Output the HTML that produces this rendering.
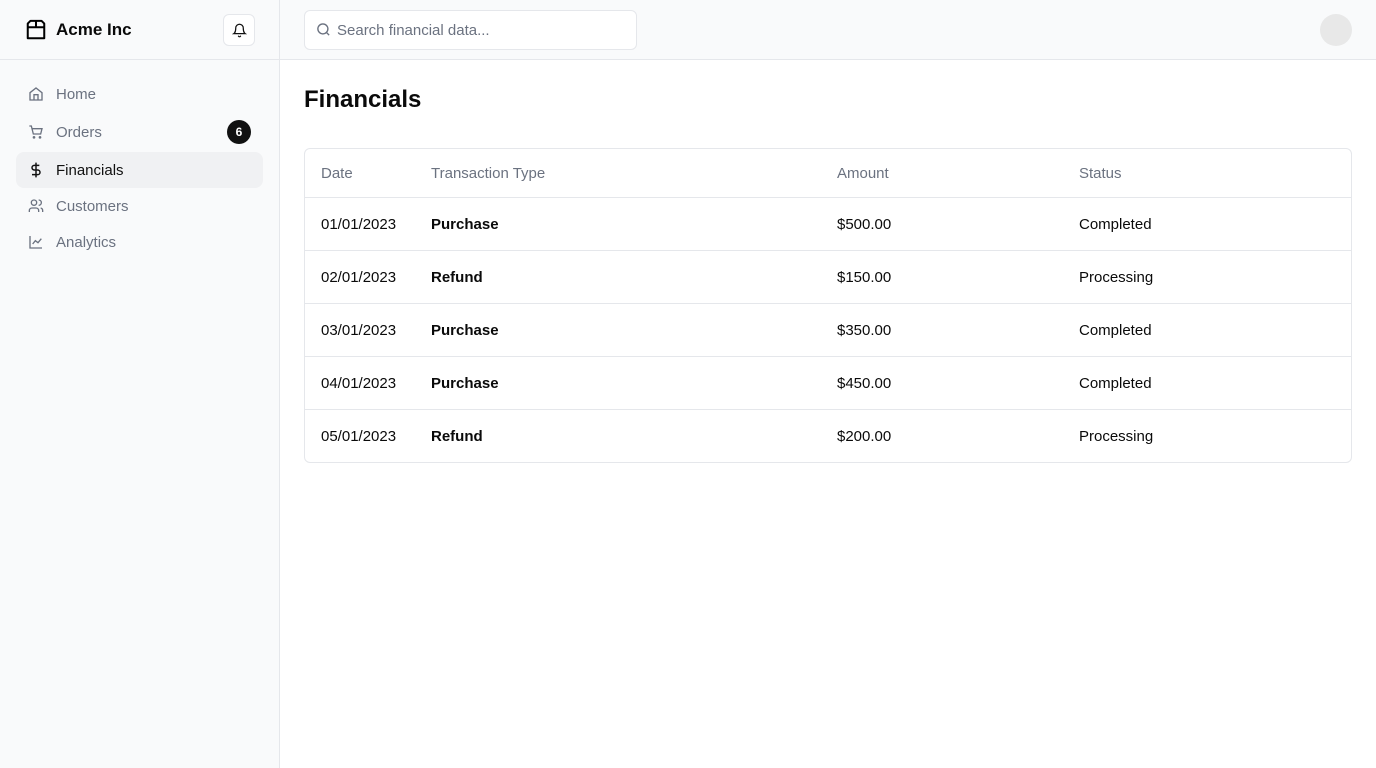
<!DOCTYPE html>
<html><head><style>
*{box-sizing:border-box;margin:0;padding:0}
body{width:1376px;height:768px;font-family:"Liberation Sans",sans-serif;background:#fff;position:relative;overflow:hidden;color:#0a0a0a}
.side{position:absolute;left:0;top:0;width:280px;height:768px;background:#f9fafb;border-right:1px solid #e5e7eb}
.sh{height:60px;border-bottom:1px solid #e5e7eb;position:relative}
.logo{position:absolute;left:25px;top:19px;display:flex;align-items:center;gap:9px;font-weight:bold;font-size:17px}
.bell{position:absolute;left:223px;top:14px;width:32px;height:32px;border:1px solid #e5e7eb;border-radius:6px;background:#fff;display:flex;align-items:center;justify-content:center}
.nav{position:absolute;left:16px;width:247px;height:36px;display:flex;align-items:center;padding-left:12px;gap:12px;font-size:15px;color:#6b7280;border-radius:8px}
.nav.act{background:#f0f1f3;color:#111}
.badge{position:absolute;right:12px;top:6px;width:24px;height:24px;border-radius:50%;background:#111;color:#fff;font-size:12px;font-weight:bold;display:flex;align-items:center;justify-content:center}
.top{position:absolute;left:280px;top:0;right:0;height:60px;background:#f9fafb;border-bottom:1px solid #e5e7eb}
.search{position:absolute;left:24px;top:10px;width:333px;height:40px;background:#fff;border:1px solid #e5e7eb;border-radius:6px;font-size:15px;color:#6b7280;display:flex;align-items:center;padding-left:32px}
.av{position:absolute;right:24px;top:14px;width:32px;height:32px;border-radius:50%;background:#e8e8e8}
h1{position:absolute;left:304px;top:86px;font-size:24px;font-weight:bold}
table{position:absolute;left:304px;top:148px;width:1048px;border:1px solid #e5e7eb;border-radius:6px;border-collapse:separate;border-spacing:0;font-size:15px}
th{height:48px;text-align:left;font-weight:normal;color:#6b7280;padding-left:16px}
td{height:53px;padding-left:16px;border-top:1px solid #e5e7eb}
td.b{font-weight:bold}
</style></head><body>
<div class="side">
 <div class="sh">
  <div class="logo"><svg width="22" height="22" viewBox="0 0 24 24" fill="none" stroke="#000" stroke-width="2.2" stroke-linejoin="round"><path d="M3 5l3-3h12l3 3v16H3z"/><path d="M3 9h18M12 2v7"/></svg>Acme Inc</div>
  <div class="bell"><svg width="15" height="15" viewBox="0 0 24 24" fill="none" stroke="#111" stroke-width="2" stroke-linecap="round"><path d="M6 8a6 6 0 0 1 12 0c0 7 3 9 3 9H3s3-2 3-9"/><path d="M10.3 21a1.9 1.9 0 0 0 3.4 0"/></svg></div>
 </div>
 <div class="nav" style="top:76px"><svg width="16" height="16" viewBox="0 0 24 24" fill="none" stroke="#6b7280" stroke-width="2"><path d="M3 10l9-7 9 7v11H3z"/><path d="M9 21v-8h6v8"/></svg>Home</div>
 <div class="nav" style="top:114px"><svg width="16" height="16" viewBox="0 0 24 24" fill="none" stroke="#6b7280" stroke-width="2"><path d="M2 3h3l3 12h11l2-8H6"/><circle cx="9" cy="20" r="1"/><circle cx="18" cy="20" r="1"/></svg>Orders<span class="badge">6</span></div>
 <div class="nav act" style="top:152px"><svg width="16" height="16" viewBox="0 0 24 24" fill="none" stroke="#111" stroke-width="2.2"><path d="M12 1v22M17 5H9.5a3.5 3.5 0 0 0 0 7h5a3.5 3.5 0 0 1 0 7H6"/></svg>Financials</div>
 <div class="nav" style="top:188px"><svg width="16" height="16" viewBox="0 0 24 24" fill="none" stroke="#6b7280" stroke-width="2"><circle cx="9" cy="7" r="4"/><path d="M2 21v-2a4 4 0 0 1 4-4h6a4 4 0 0 1 4 4v2M16 3a4 4 0 0 1 0 8M22 21v-2a4 4 0 0 0-3-4"/></svg>Customers</div>
 <div class="nav" style="top:224px"><svg width="16" height="16" viewBox="0 0 24 24" fill="none" stroke="#6b7280" stroke-width="2"><path d="M3 3v18h18"/><path d="M7 15l4-5 4 3 5-6"/></svg>Analytics</div>
</div>
<div class="top">
 <div class="search"><svg style="position:absolute;left:11px;top:11px" width="15" height="15" viewBox="0 0 24 24" fill="none" stroke="#6b7280" stroke-width="2.2"><circle cx="11" cy="11" r="8"/><path d="M21 21l-4.3-4.3"/></svg>Search financial data...</div>
 <div class="av"></div>
</div>
<h1>Financials</h1>
<table>
<tr><th style="width:110px">Date</th><th style="width:406px">Transaction Type</th><th style="width:242px">Amount</th><th>Status</th></tr>
<tr><td>01/01/2023</td><td class="b">Purchase</td><td>$500.00</td><td>Completed</td></tr>
<tr><td>02/01/2023</td><td class="b">Refund</td><td>$150.00</td><td>Processing</td></tr>
<tr><td>03/01/2023</td><td class="b">Purchase</td><td>$350.00</td><td>Completed</td></tr>
<tr><td>04/01/2023</td><td class="b">Purchase</td><td>$450.00</td><td>Completed</td></tr>
<tr><td>05/01/2023</td><td class="b">Refund</td><td>$200.00</td><td>Processing</td></tr>
</table>
</body></html>
